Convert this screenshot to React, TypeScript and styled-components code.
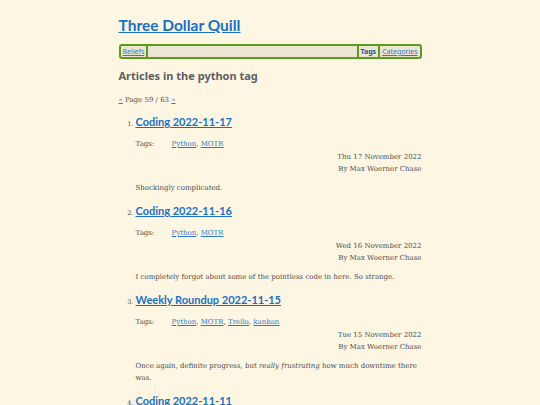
import React from 'react'
import styled, { createGlobalStyle } from 'styled-components'

const GlobalStyle = createGlobalStyle`
  html, body { margin: 0; padding: 0; background: #fdf6e3; }
  body { font-family: "DejaVu Serif", "Liberation Serif", serif; color: #4d4d4d; }
`

const Page = styled.div`
  width: 303px;
  margin: 0 auto;
  padding-top: 14px;
`

const Title = styled.h1`
  margin: 0 0 8px;
  font-family: Lato, "Noto Sans", sans-serif;
  font-size: 15.5px;
  line-height: 22px;
  font-weight: 700;
  a { color: #1b70c4; }
`

const Nav = styled.nav`
  display: flex;
  align-items: stretch;
  height: 11px;
  border: 2px solid #5e9a1c;
  border-radius: 3px;
  background: #ebe5d3;
  font-family: "Noto Sans", "Open Sans", sans-serif;
  font-size: 7px;
  line-height: 11px;
`

const NavItem = styled.a<{ $current?: boolean; $side: 'left' | 'right' }>`
  padding: 0 2px;
  color: ${(p) => (p.$current ? '#1a5a9a' : '#2f7acc')};
  font-weight: ${(p) => (p.$current ? 700 : 400)};
  text-decoration: ${(p) => (p.$current ? 'none' : 'underline')};
  ${(p) => (p.$side === 'left' ? 'border-right: 2px solid #5e9a1c;' : 'border-left: 2px solid #5e9a1c;')}
`

const Spacer = styled.span`
  flex: 1;
`

const Heading = styled.h2`
  margin: 9px 0 12px;
  font-family: "Noto Sans", "Open Sans", sans-serif;
  font-size: 11px;
  line-height: 15px;
  font-weight: 700;
  color: #5d6165;
`

const Pager = styled.p`
  margin: 0 0 8px;
  font-size: 7px;
  line-height: 10px;
  a { color: #2f7acc; }
`

const List = styled.ol`
  margin: 0;
  padding-left: 17px;
  font-size: 7px;
`

const Item = styled.li`
  &::marker { font-size: 6.5px; }
`

const ItemTitle = styled.h3`
  display: inline-block;
  margin: 0;
  font-family: Lato, "Noto Sans", sans-serif;
  font-size: 11px;
  line-height: 18px;
  font-weight: 700;
  a { color: #1b70c4; }
`

const TagRow = styled.div`
  display: flex;
  margin-top: 7px;
  line-height: 12px;
`

const TagLabel = styled.span`
  width: 36px;
`

const TagLink = styled.a`
  color: #2f7acc;
`

const Meta = styled.div`
  margin-top: 1px;
  text-align: right;
  line-height: 12px;
`

const Summary = styled.p`
  margin: 7px 0 8px;
  line-height: 12px;
`

type Post = {
  title: string
  tags: string[]
  date: string
  summary: React.ReactNode
}

const posts: Post[] = [
  {
    title: 'Coding 2022-11-17',
    tags: ['Python', 'MOTR'],
    date: 'Thu 17 November 2022',
    summary: 'Shockingly complicated.',
  },
  {
    title: 'Coding 2022-11-16',
    tags: ['Python', 'MOTR'],
    date: 'Wed 16 November 2022',
    summary: 'I completely forgot about some of the pointless code in here. So strange.',
  },
  {
    title: 'Weekly Roundup 2022-11-15',
    tags: ['Python', 'MOTR', 'Trello', 'kanban'],
    date: 'Tue 15 November 2022',
    summary: (
      <>
        Once again, definite progress, but <em>really frustrating</em> how much downtime there was.
      </>
    ),
  },
  {
    title: 'Coding 2022-11-11',
    tags: ['Python', 'MOTR'],
    date: 'Fri 11 November 2022',
    summary: 'More work.',
  },
]

export default function App() {
  return (
    <>
      <GlobalStyle />
      <Page>
        <Title>
          <a href="#">Three Dollar Quill</a>
        </Title>
        <Nav>
          <NavItem href="#" $side="left">Beliefs</NavItem>
          <Spacer />
          <NavItem href="#" $side="right" $current>Tags</NavItem>
          <NavItem href="#" $side="right">Categories</NavItem>
        </Nav>
        <Heading>Articles in the python tag</Heading>
        <Pager>
          <a href="#">«</a> Page 59 / 63 <a href="#">»</a>
        </Pager>
        <List>
          {posts.map((post) => (
            <Item key={post.title}>
              <ItemTitle>
                <a href="#">{post.title}</a>
              </ItemTitle>
              <TagRow>
                <TagLabel>Tags:</TagLabel>
                <span>
                  {post.tags.map((tag, i) => (
                    <React.Fragment key={tag}>
                      {i > 0 && ', '}
                      <TagLink href="#">{tag}</TagLink>
                    </React.Fragment>
                  ))}
                </span>
              </TagRow>
              <Meta>
                {post.date}
                <br />
                By Max Woerner Chase
              </Meta>
              <Summary>{post.summary}</Summary>
            </Item>
          ))}
        </List>
      </Page>
    </>
  )
}
